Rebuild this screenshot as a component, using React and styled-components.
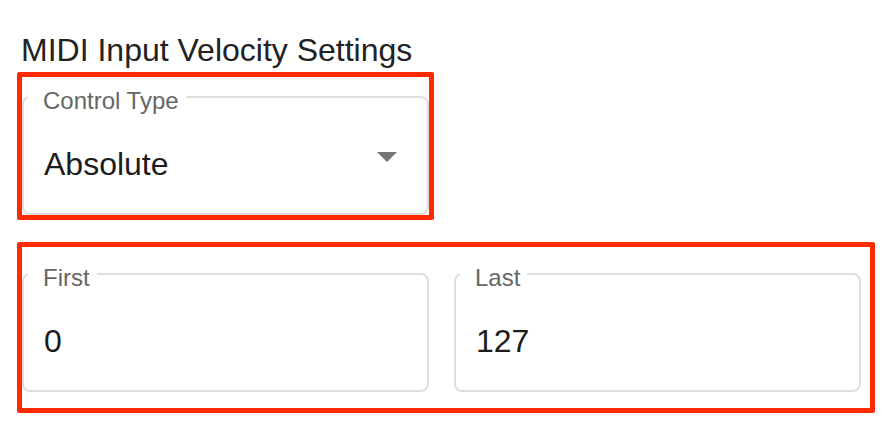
import React from 'react'
import styled, { createGlobalStyle } from 'styled-components'

const GlobalStyle = createGlobalStyle`
  body {
    margin: 0;
    background: #ffffff;
    font-family: "Liberation Sans", Arial, Helvetica, sans-serif;
  }
`

const Page = styled.div`
  display: flex;
  flex-direction: column;
  align-items: flex-start;
  padding: 32px 0 0 17px;
`

const Title = styled.div`
  margin: 0 0 4px 4px;
  font-size: 32px;
  line-height: 36px;
  color: #222222;
`

const Highlight = styled.div`
  box-sizing: border-box;
  width: ${(p) => p.$width}px;
  height: ${(p) => p.$height}px;
  border: 5px solid #ff2a00;
  border-radius: 2px;
  padding-top: ${(p) => p.$top}px;
  margin-bottom: 22px;
`

const Row = styled.div`
  display: grid;
  grid-template-columns: 1fr 1fr;
  column-gap: 25px;
  padding-right: 9px;
`

const Field = styled.fieldset`
  box-sizing: border-box;
  min-width: 0;
  margin: 0;
  padding: 0 22px 29px 20px;
  border: 2px solid #dedede;
  border-radius: 8px;
`

const Label = styled.legend`
  margin-left: -16px;
  padding: 9px 7px 0 15px;
  font-size: 24px;
  line-height: 24px;
  color: #666666;
`

const ValueLine = styled.div`
  display: flex;
  justify-content: space-between;
  align-items: flex-start;
  padding-top: 31px;
  font-size: 32px;
  line-height: 40px;
  color: #1c1c1c;
`

const Caret = styled.svg`
  width: 20px;
  height: 10px;
  margin: 8px 8px 0 0;
  fill: #757575;
`

const TextField = ({ label, value, select }) => (
  <Field>
    <Label>{label}</Label>
    <ValueLine>
      <span>{value}</span>
      {select && (
        <Caret viewBox="0 0 20 10">
          <path d="M0 0 L20 0 L10 10 Z" />
        </Caret>
      )}
    </ValueLine>
  </Field>
)

const App = () => {
  return (
    <Page>
      <GlobalStyle />
      <Title>MIDI Input Velocity Settings</Title>
      <Highlight $width={417} $height={148} $top={3}>
        <TextField label="Control Type" value="Absolute" select />
      </Highlight>
      <Highlight $width={858} $height={171} $top={10}>
        <Row>
          <TextField label="First" value="0" />
          <TextField label="Last" value="127" />
        </Row>
      </Highlight>
    </Page>
  )
}

export default App
